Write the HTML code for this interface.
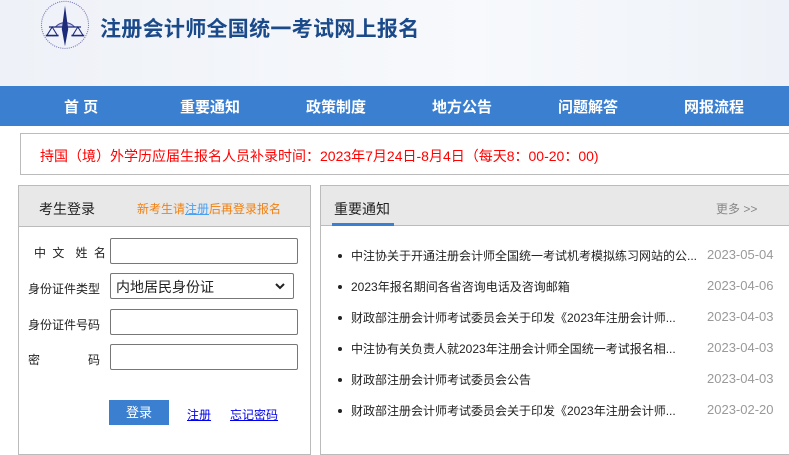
<!DOCTYPE html>
<html><head><meta charset="utf-8"><style>
*{margin:0;padding:0;box-sizing:border-box}
body{width:789px;height:442px;overflow:hidden;background:#fff;font-family:"Liberation Sans","Noto Sans CJK SC",sans-serif;font-size:13px;color:#222;position:relative}
.hdr{position:absolute;left:0;top:0;width:789px;height:86px;background:linear-gradient(90deg,#eef1f7,#f7f9fc 60%,#eef2f8)}
.title{position:absolute;left:100px;top:13px;font-size:21px;font-weight:bold;color:#1b4a8a;letter-spacing:0.3px}
.nav{position:absolute;left:0;top:86px;width:789px;height:40px;background:#3a7fd0}
.nav span{position:absolute;top:10px;color:#fff;font-weight:bold;font-size:15px}
.notice{position:absolute;left:20px;top:133px;width:790px;height:42px;border:1px solid #bbb;color:#f00;font-size:14px;padding:12px 0 0 19px}
.lp{position:absolute;left:18px;top:185px;width:293px;height:270px;border:1px solid #bbb}
.lh{height:41px;background:#e8e8e8;border-bottom:1px solid #bbb;position:relative}
.lab{position:absolute;font-size:12px;color:#222;white-space:nowrap}
.inp{position:absolute;left:91px;width:188px;height:26px;border:1px solid #777;border-radius:2px;background:#fff}
.rp{position:absolute;left:320px;top:185px;width:480px;height:270px;border:1px solid #bbb}
.rh{height:40px;background:#e8e8e8;border-bottom:1px solid #bbb;position:relative}
.li{position:absolute;left:30px;font-size:12px;color:#222;white-space:nowrap}
.li:before{content:"";position:absolute;left:-13px;top:7px;width:4px;height:4px;border-radius:50%;background:#222}
.dt{position:absolute;left:386px;font-size:13px;color:#999}
</style></head><body>
<div class="hdr">
<svg style="position:absolute;left:34px;top:-2px" width="62" height="58" viewBox="0 0 58 52">
<circle cx="29" cy="24" r="22" fill="none" stroke="#7a7ab8" stroke-width="1" stroke-dasharray="1 1"/>
<path d="M20 26 A12 12 0 0 1 38 26" fill="#c6c6e8" stroke="#4a4aa0"/>
<path d="M29 6 L32 28 L29 44 L26 28Z" fill="#1c2a7a"/>
<line x1="14" y1="26" x2="44" y2="26" stroke="#1c2a7a" stroke-width="1.2"/>
<path d="M12 34 L17 26 L22 34Z M36 34 L41 26 L46 34Z" fill="none" stroke="#1c2a7a"/>
<line x1="11" y1="34" x2="23" y2="34" stroke="#1c2a7a" stroke-width="1.5"/>
<line x1="35" y1="34" x2="47" y2="34" stroke="#1c2a7a" stroke-width="1.5"/>
</svg>
<div class="title">注册会计师全国统一考试网上报名</div>
</div>
<div class="nav">
<span style="left:64px">首 页</span><span style="left:180px">重要通知</span><span style="left:306px">政策制度</span><span style="left:432px">地方公告</span><span style="left:558px">问题解答</span><span style="left:684px">网报流程</span>
</div>
<div class="notice">持国（境）外学历应届生报名人员补录时间：2023年7月24日-8月4日（每天8：00-20：00)</div>
<div class="lp">
<div class="lh"><span class="lab" style="left:20px;top:13px;font-size:14px">考生登录</span><span class="lab" style="left:118px;top:14px;color:#f08010">新考生请<u style="color:#4aa0f0">注册</u>后再登录报名</span></div>
<span class="lab" style="left:15px;top:58px;letter-spacing:1.5px">中 文&nbsp; 姓 名</span><div class="inp" style="top:52px"></div>
<span class="lab" style="left:9px;top:94px">身份证件类型</span>
<div class="inp" style="top:87px;width:184px;font-size:14px;padding:3px 5px">内地居民身份证<svg style="position:absolute;right:8px;top:9px" width="10" height="7"><path d="M1 1 L5 5 L9 1" stroke="#222" stroke-width="2" fill="none"/></svg></div>
<span class="lab" style="left:9px;top:130px">身份证件号码</span><div class="inp" style="top:123px"></div>
<span class="lab" style="left:9px;top:165px">密</span><span class="lab" style="left:69px;top:165px">码</span><div class="inp" style="top:158px"></div>
<div style="position:absolute;left:90px;top:214px;width:60px;height:25px;background:#3a7fd0;color:#fff;text-align:center;line-height:25px">登录</div>
<span class="lab" style="left:168px;top:220px;color:#00e;text-decoration:underline">注册</span>
<span class="lab" style="left:211px;top:220px;color:#00e;text-decoration:underline">忘记密码</span>
</div>
<div class="rp">
<div class="rh"><span class="lab" style="left:13px;top:13px;font-size:14px">重要通知</span><div style="position:absolute;left:11px;bottom:-1px;width:62px;height:3px;background:#3a7fd0"></div><span class="lab" style="left:395px;top:14px;color:#888">更多 &gt;&gt;</span></div>
<div class="li" style="top:61px">中注协关于开通注册会计师全国统一考试机考模拟练习网站的公...</div><div class="dt" style="top:61px">2023-05-04</div>
<div class="li" style="top:92px">2023年报名期间各省咨询电话及咨询邮箱</div><div class="dt" style="top:92px">2023-04-06</div>
<div class="li" style="top:123px">财政部注册会计师考试委员会关于印发《2023年注册会计师...</div><div class="dt" style="top:123px">2023-04-03</div>
<div class="li" style="top:154px">中注协有关负责人就2023年注册会计师全国统一考试报名相...</div><div class="dt" style="top:154px">2023-04-03</div>
<div class="li" style="top:185px">财政部注册会计师考试委员会公告</div><div class="dt" style="top:185px">2023-04-03</div>
<div class="li" style="top:216px">财政部注册会计师考试委员会关于印发《2023年注册会计师...</div><div class="dt" style="top:216px">2023-02-20</div>
</div>
</body></html>
